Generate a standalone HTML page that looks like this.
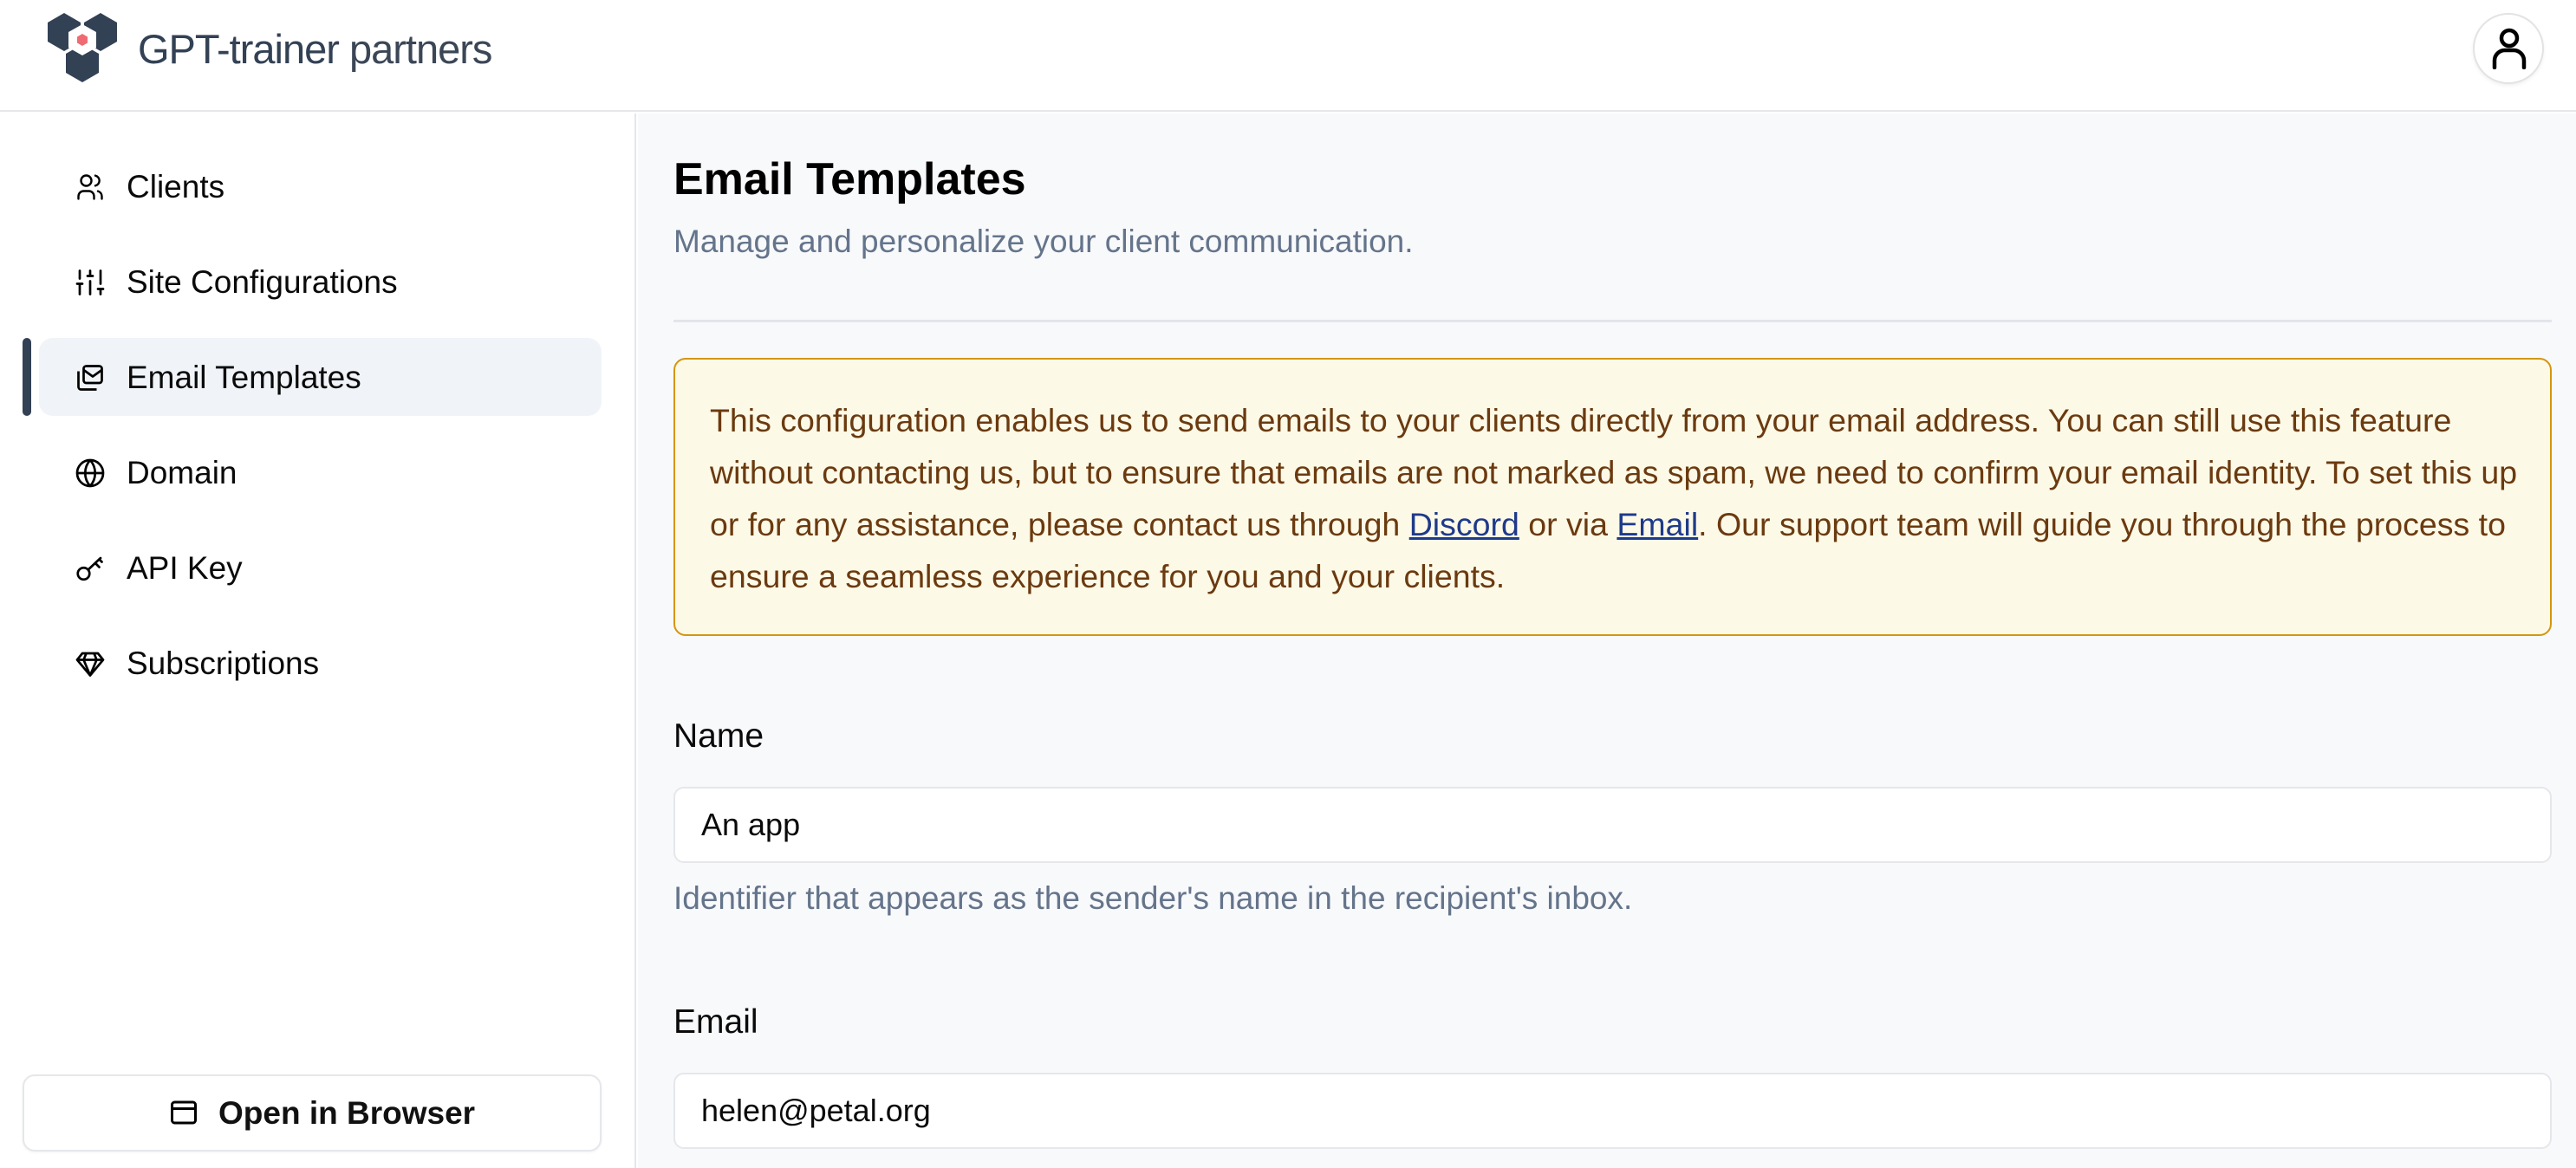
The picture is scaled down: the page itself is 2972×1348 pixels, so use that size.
<!DOCTYPE html>
<html><head><meta charset="utf-8"><style>
*{box-sizing:border-box;margin:0;padding:0}
body{width:2972px;height:1348px;overflow:hidden;font-family:"Liberation Sans",sans-serif;background:#fff;position:relative;color:#0a0a0a}
.hdr{position:absolute;left:0;top:0;width:2972px;height:129px;background:#fff;border-bottom:2px solid #e5e7eb}
.logo-t{position:absolute;left:159px;top:29px;font-size:47px;color:#334155;letter-spacing:-1px}
.logo-t span{font-weight:normal;color:#3b4656}
.av{position:absolute;left:2853px;top:15px;width:82px;height:82px;border-radius:50%;border:2px solid #e3e3e3;box-shadow:0 2px 4px rgba(0,0,0,.06);background:#fff}
.side{position:absolute;left:0;top:131px;width:734px;height:1217px;background:#fff;border-right:2px solid #e5e7eb}
.main{position:absolute;left:736px;top:131px;width:2236px;height:1217px;background:#f8f9fb}
.nav{position:absolute;left:0;width:734px;height:90px}
.nav svg{position:absolute;left:86px;top:27px}
.nav .t{position:absolute;left:146px;top:0;line-height:90px;font-size:37px;color:#0a0a0a}
.act{position:absolute;left:45px;top:259px;width:649px;height:90px;background:#f0f4f8;border-radius:16px}
.bar{position:absolute;left:26px;top:259px;width:10px;height:90px;background:#334155;border-radius:5px}
.btn{position:absolute;left:26px;width:668px;height:89px;border:2px solid #e5e7eb;border-radius:14px;background:#fff;box-shadow:0 1px 3px rgba(0,0,0,.05)}
.btn .t{position:absolute;left:224px;top:0;line-height:86px;font-size:37px;font-weight:bold;color:#111}
.abs{position:absolute}
.alert{position:absolute;left:777px;top:413px;width:2167px;height:321px;background:#fdf9e7;border:2px solid #d4960f;border-radius:14px}
.alert p{position:absolute;left:40px;top:40px;font-size:37.5px;line-height:60px;color:#6b3a10;white-space:nowrap}
.alert a{color:#1e3a8a;text-decoration:underline}
.inp{position:absolute;left:777px;width:2167px;height:88px;background:#fff;border:2px solid #e5e7eb;border-radius:12px;font-size:36px;line-height:84px;padding-left:30px;color:#0a0a0a}
.lbl{position:absolute;left:777px;font-size:39px;color:#0a0a0a}
.help{position:absolute;left:777px;font-size:37px;color:#64748b}
</style></head><body>
<div class="hdr">
<svg class="abs" style="left:53px;top:15px" width="84" height="80" viewBox="0 0 84 80">
<polygon points="21,0 40,11 40,33 21,44 2,33 2,11" fill="#334155"/>
<polygon points="63,0 82,11 82,33 63,44 44,33 44,11" fill="#334155"/>
<polygon points="42,36 61,47 61,69 42,80 23,69 23,47" fill="#334155"/>
<polygon points="42,13 58,22 58,40 42,49 26,40 26,22" fill="#fff"/>
<polygon points="42,24 48,27.5 48,34.5 42,38 36,34.5 36,27.5" fill="#ef6b73"/>
</svg>
<div class="logo-t">GPT-trainer <span>partners</span></div>
<div class="av"><svg class="abs" style="left:18px;top:15px" width="44" height="48" viewBox="0 0 44 48" fill="none" stroke="#000" stroke-width="4.5" stroke-linecap="round"><circle cx="22" cy="12" r="9"/><path d="M5 46V38a12 12 0 0 1 12-12h10a12 12 0 0 1 12 12v8"/></svg></div>
</div>
<div class="side">
<div class="act"></div><div class="bar"></div>
<div class="nav" style="top:40px"><svg width="36" height="36" viewBox="0 0 24 24" fill="none" stroke="#000" stroke-width="1.6" stroke-linecap="round"><circle cx="9" cy="7" r="4"/><path d="M3 21v-2a4 4 0 0 1 4-4h4a4 4 0 0 1 4 4v2M16 3.1a4 4 0 0 1 0 7.8M21 21v-2a4 4 0 0 0-3-3.9"/></svg><div class="t">Clients</div></div>
<div class="nav" style="top:150px"><svg width="36" height="36" viewBox="0 0 24 24" fill="none" stroke="#000" stroke-width="1.8" stroke-linecap="round"><path d="M4 3v6M4 13v8M2 13h4M12 3v4M12 11v10M10 7h4M20 3v10M20 17v4M18 17h4"/></svg><div class="t">Site Configurations</div></div>
<div class="nav" style="top:260px"><svg width="36" height="36" viewBox="0 0 24 24" fill="none" stroke="#000" stroke-width="1.8" stroke-linejoin="round"><rect x="7" y="3" width="14" height="13" rx="2"/><path d="M7 6l7 5 7-5M3 7v12a2 2 0 0 0 2 2h12"/></svg><div class="t">Email Templates</div></div>
<div class="nav" style="top:370px"><svg width="36" height="36" viewBox="0 0 24 24" fill="none" stroke="#000" stroke-width="1.8"><circle cx="12" cy="12" r="10"/><path d="M2 12h20M12 2a15 15 0 0 1 0 20M12 2a15 15 0 0 0 0 20"/></svg><div class="t">Domain</div></div>
<div class="nav" style="top:480px"><svg width="36" height="36" viewBox="0 0 24 24" fill="none" stroke="#000" stroke-width="1.8" stroke-linecap="round"><circle cx="7" cy="16" r="4.5"/><path d="M10.5 13L20 4M16 8l3 3M19 5l2 2"/></svg><div class="t">API Key</div></div>
<div class="nav" style="top:590px"><svg width="36" height="36" viewBox="0 0 24 24" fill="none" stroke="#000" stroke-width="1.8" stroke-linejoin="round"><path d="M6 4h12l4 5-10 12L2 9z"/><path d="M2 9h20M9 4l-2 5 5 12 5-12-2-5"/></svg><div class="t">Subscriptions</div></div>
<div class="btn" style="top:1109px"><svg class="abs" style="left:166px;top:24px" width="36" height="36" viewBox="0 0 24 24" fill="none" stroke="#000" stroke-width="2"><rect x="3" y="4" width="18" height="16" rx="2"/><path d="M3 9h18"/></svg><div class="t">Open in Browser</div></div>
</div>
<div class="main"></div>
<div class="abs" style="left:777px;top:177px;font-size:52px;font-weight:bold;color:#000">Email Templates</div>
<div class="abs" style="left:777px;top:258px;font-size:37px;color:#64748b">Manage and personalize your client communication.</div>
<div class="abs" style="left:777px;top:369px;width:2167px;height:3px;background:#e2e5ea"></div>
<div class="alert"><p>This configuration enables us to send emails to your clients directly from your email address. You can still use this feature<br>without contacting us, but to ensure that emails are not marked as spam, we need to confirm your email identity. To set this up<br>or for any assistance, please contact us through <a>Discord</a> or via <a>Email</a>. Our support team will guide you through the process to<br>ensure a seamless experience for you and your clients.</p></div>
<div class="lbl" style="top:828px">Name</div>
<div class="inp" style="top:908px">An app</div>
<div class="help" style="top:1016px">Identifier that appears as the sender's name in the recipient's inbox.</div>
<div class="lbl" style="top:1158px">Email</div>
<div class="inp" style="top:1238px">helen@petal.org</div>
</body></html>
